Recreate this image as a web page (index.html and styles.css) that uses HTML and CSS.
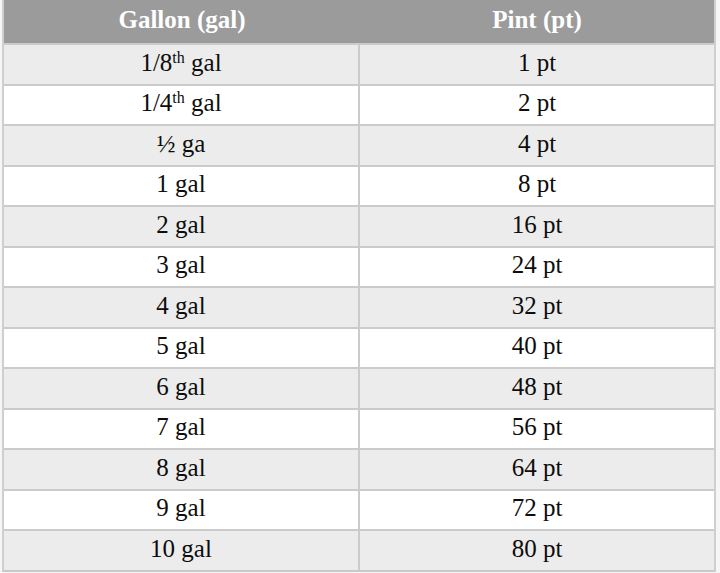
FILE: index.html
```html
<!DOCTYPE html>
<html>
<head>
<meta charset="utf-8">
<link rel="stylesheet" href="styles.css">
</head>
<body>
<div class="table">
  <div class="row head"><div class="cell"><span>Gallon (gal)</span></div><div class="cell"><span>Pint (pt)</span></div></div>
  <div class="row odd"><div class="cell"><span>1/8<sup>th</sup> gal</span></div><div class="cell"><span>1 pt</span></div></div>
  <div class="row"><div class="cell"><span>1/4<sup>th</sup> gal</span></div><div class="cell"><span>2 pt</span></div></div>
  <div class="row odd"><div class="cell"><span>½ ga</span></div><div class="cell"><span>4 pt</span></div></div>
  <div class="row"><div class="cell"><span>1 gal</span></div><div class="cell"><span>8 pt</span></div></div>
  <div class="row odd"><div class="cell"><span>2 gal</span></div><div class="cell"><span>16 pt</span></div></div>
  <div class="row"><div class="cell"><span>3 gal</span></div><div class="cell"><span>24 pt</span></div></div>
  <div class="row odd"><div class="cell"><span>4 gal</span></div><div class="cell"><span>32 pt</span></div></div>
  <div class="row"><div class="cell"><span>5 gal</span></div><div class="cell"><span>40 pt</span></div></div>
  <div class="row odd"><div class="cell"><span>6 gal</span></div><div class="cell"><span>48 pt</span></div></div>
  <div class="row"><div class="cell"><span>7 gal</span></div><div class="cell"><span>56 pt</span></div></div>
  <div class="row odd"><div class="cell"><span>8 gal</span></div><div class="cell"><span>64 pt</span></div></div>
  <div class="row"><div class="cell"><span>9 gal</span></div><div class="cell"><span>72 pt</span></div></div>
  <div class="row odd"><div class="cell"><span>10 gal</span></div><div class="cell"><span>80 pt</span></div></div>
</div>
</body>
</html>
```
FILE: styles.css
```css
html, body {
  margin: 0;
  padding: 0;
  background: #f6f6f6;
}
body {
  font-family: "Liberation Serif", "Times New Roman", serif;
  color: #0d0d0d;
}
.table {
  width: 714px;
  margin-left: 2px;
  display: flex;
  flex-direction: column;
  border-left: 2px solid #cfcfcf;
  border-right: 2px solid #cfcfcf;
  border-bottom: 2px solid #c9c9c9;
  box-sizing: border-box;
  background: #fff;
}
.row {
  display: grid;
  grid-template-columns: 356px 1fr;
  height: 40.5px;
  box-sizing: border-box;
  border-top: 2px solid #cbcbcb;
  background: #ffffff;
}
.row.odd {
  background: #ececec;
}
.row.head {
  height: 43px;
  border-top: none;
  background: #9b9b9b;
  color: #ffffff;
  font-weight: bold;
}
.cell {
  display: flex;
  align-items: center;
  justify-content: center;
  font-size: 25px;
  line-height: 1;
  padding-bottom: 4px;
}
.head .cell {
  font-size: 25px;
  padding-bottom: 4px;
}
.cell:first-child {
  border-right: 2px solid #cbcbcb;
}
.head .cell:first-child {
  border-right: none;
}
sup {
  font-size: 16px;
  line-height: 0;
  vertical-align: 0;
  position: relative;
  top: -8px;
}
```
